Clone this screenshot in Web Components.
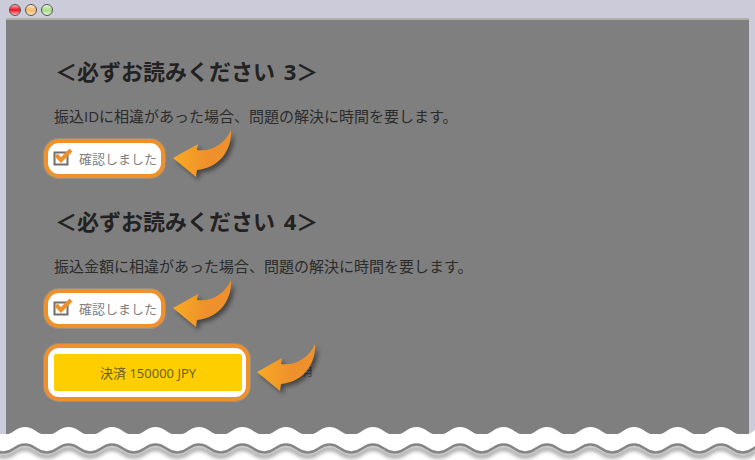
<!DOCTYPE html>
<html lang="ja">
<head>
<meta charset="utf-8">
<title>確認</title>
<style>
  html, body { margin: 0; height: 100%; background: #fff; overflow: hidden; }
  body { font-family: "Open Sans", "Noto Sans CJK JP", sans-serif; }
</style>
</head>
<body>
<app-window>
  <notice-block title-text="＜必ずお読みください 3＞" body-text="振込IDに相違があった場合、問題の解決に時間を要します。"></notice-block>
  <notice-block title-text="＜必ずお読みください 4＞" body-text="振込金額に相違があった場合、問題の解決に時間を要します。"></notice-block>
  <pay-button label="決済 150000 JPY"></pay-button>
</app-window>
<torn-edge></torn-edge>

<script>
// 吹き出し用の矢印
class CalloutArrow extends HTMLElement {
    constructor() {
        super();
        this.attachShadow({ mode: 'open' });
    }
    connectedCallback() {
        const id = 'g' + Math.random().toString(36).slice(2);
        this.shadowRoot.innerHTML = `
            <style>
                :host { display: block; position: absolute; width: 60px; height: 48px; }
                svg { display: block; overflow: visible; filter: drop-shadow(3px 3px 2px rgba(0,0,0,.45)); }
            </style>
            <svg width="60" height="48" viewBox="0 0 60 48">
                <defs>
                    <linearGradient id="${id}" x1="0" x2="1" y1="0" y2="0">
                        <stop offset="0" stop-color="#f8aa22"/>
                        <stop offset=".6" stop-color="#ee902c"/>
                    </linearGradient>
                </defs>
                <path fill="url(#${id})" d="M0 28 L25 14 L24 20 C38 22 52 14 58 0 C59 22 45 38 24 40 L23 47 Z"/>
            </svg>`;
    }
}

class ConfirmCheck extends HTMLElement {
    constructor() {
        super();
        this.attachShadow({ mode: 'open' });
    }
    connectedCallback() {
        this.shadowRoot.innerHTML = `
            <style>
                :host { display: block; position: relative; width: 121px; height: 39px; margin: 13px 0 0 -10px; }
                .box {
                    box-sizing: border-box; width: 100%; height: 100%;
                    display: flex; align-items: center; gap: 6px; padding-left: 5px;
                    background: #fff; border: 4px solid #ee902c; border-radius: 15px;
                    box-shadow: 0 0 0 1px #9a8f80;
                    font-size: 13px; color: #7f7f7f; white-space: nowrap;
                }
                svg { display: block; flex: none; margin-top: -4px; }
                callout-arrow { left: 129px; top: -9px; }
            </style>
            <div class="box">
                <svg width="20" height="19" viewBox="0 0 20 19">
                    <rect x="1.5" y="5.5" width="13" height="12" fill="none" stroke="#6f6f6f" stroke-width="2"/>
                    <path d="M3 8 L8 13 L18 3" fill="none" stroke="#ee902c" stroke-width="4.2"/>
                </svg>
                <span>確認しました</span>
            </div>
            <callout-arrow></callout-arrow>`;
    }
}

class NoticeBlock extends HTMLElement {
    constructor() {
        super();
        this.attachShadow({ mode: 'open' });
    }
    connectedCallback() {
        const h = document.createElement('h2');
        h.textContent = this.getAttribute('title-text');
        const p = document.createElement('p');
        p.textContent = this.getAttribute('body-text');
        this.shadowRoot.innerHTML = `
            <style>
                :host { display: block; height: 150px; }
                h2 { margin: 0 0 0 1px; font-size: 22px; line-height: 30px; font-weight: 700; color: #222; word-spacing: 3px; }
                p { margin: 20px 0 0; font-size: 15px; line-height: 20px; color: #2b2b2b; white-space: nowrap; }
            </style>`;
        this.shadowRoot.append(h, p, document.createElement('confirm-check'));
    }
}

class PayButton extends HTMLElement {
    constructor() {
        super();
        this.attachShadow({ mode: 'open' });
    }
    connectedCallback() {
        this.shadowRoot.innerHTML = `
            <style>
                :host { display: block; position: relative; width: 206px; height: 57px; margin: -12px 0 0 -10px; }
                .frame {
                    box-sizing: border-box; width: 100%; height: 100%; padding: 6px 4px 6px 6px;
                    background: #fff; border: 4px solid #ee902c; border-radius: 15px;
                    box-shadow: 0 0 0 1px #9a8f80;
                }
                .btn {
                    height: 100%; display: flex; align-items: center; justify-content: center;
                    background: #ffce00; border-radius: 2px;
                    font-size: 13px; color: #665a22;
                }
                .link { position: absolute; left: 259px; top: 20px; font-size: 10px; color: #1f3a5c; }
                callout-arrow { left: 213px; top: 0; }
            </style>
            <div class="frame"><div class="btn"></div></div>
            <span class="link">月</span>
            <callout-arrow></callout-arrow>`;
        this.shadowRoot.querySelector('.btn').textContent = this.getAttribute('label');
    }
}

// ウィンドウ枠
class AppWindow extends HTMLElement {
    constructor() {
        super();
        this.attachShadow({ mode: 'open' });
    }
    connectedCallback() {
        this.shadowRoot.innerHTML = `
            <style>
                :host { display: flex; flex-direction: column; height: 436px; background: #cbcbda; }
                .bar { flex: none; box-sizing: border-box; height: 18px; display: flex; align-items: center; gap: 4px; padding: 2px 0 0 9px; }
                .dot { width: 12px; height: 12px; border-radius: 50%; border: 1px solid #555; box-sizing: border-box; }
                .r { background: linear-gradient(#f6b0b0 0, #f01020 50%, #f5c0c0 100%); }
                .y { background: linear-gradient(#fbe6cf 0, #f9b868 50%, #fde2c0 100%); }
                .g { background: linear-gradient(#eef5e6 0, #a8dc88 50%, #dff0d0 100%); }
                .content {
                    flex: 1; margin: 0 6px; padding: 36px 0 0 48px;
                    background: #7f7f7f; border-top: 2px solid #b0b0a8;
                    min-height: 0;
                }
            </style>
            <div class="bar">
                <span class="dot r"></span><span class="dot y"></span><span class="dot g"></span>
            </div>
            <div class="content"><slot></slot></div>`;
    }
}

// 下端の波線
class TornEdge extends HTMLElement {
    constructor() {
        super();
        this.attachShadow({ mode: 'open' });
    }
    wave(startX, midY, amp) {
        let d = `M${startX} ${midY}`;
        for (let x = startX; x < 770; x += 43.5) {
            d += ` q10.875 ${-2 * amp} 21.75 0 t21.75 0`;
        }
        return d;
    }
    connectedCallback() {
        const top = this.wave(-29.4, 7, 4);
        const low = this.wave(-29.4, 24.5, 4);
        this.shadowRoot.innerHTML = `
            <style>
                :host { display: block; position: absolute; left: 0; top: 424px; width: 755px; height: 36px; }
                svg { display: block; }
            </style>
            <svg width="755" height="36" viewBox="0 0 755 36">
                <defs><filter id="s" x="-5%" y="-100%" width="110%" height="300%"><feGaussianBlur stdDeviation="2"/></filter></defs>
                <path d="${low}" transform="translate(0 4)" fill="none" stroke="#000" stroke-opacity=".5" stroke-width="3" filter="url(#s)"/>
                <path d="${top} L800 20 L-40 20 Z" fill="#fff"/>
                <path d="${low} L800 10 L-40 10 Z" fill="#fff"/>
                <path d="${low}" fill="none" stroke="#858585" stroke-width="2.5"/>
            </svg>`;
    }
}

customElements.define('callout-arrow', CalloutArrow);
customElements.define('confirm-check', ConfirmCheck);
customElements.define('notice-block', NoticeBlock);
customElements.define('pay-button', PayButton);
customElements.define('app-window', AppWindow);
customElements.define('torn-edge', TornEdge);
</script>
</body>
</html>
